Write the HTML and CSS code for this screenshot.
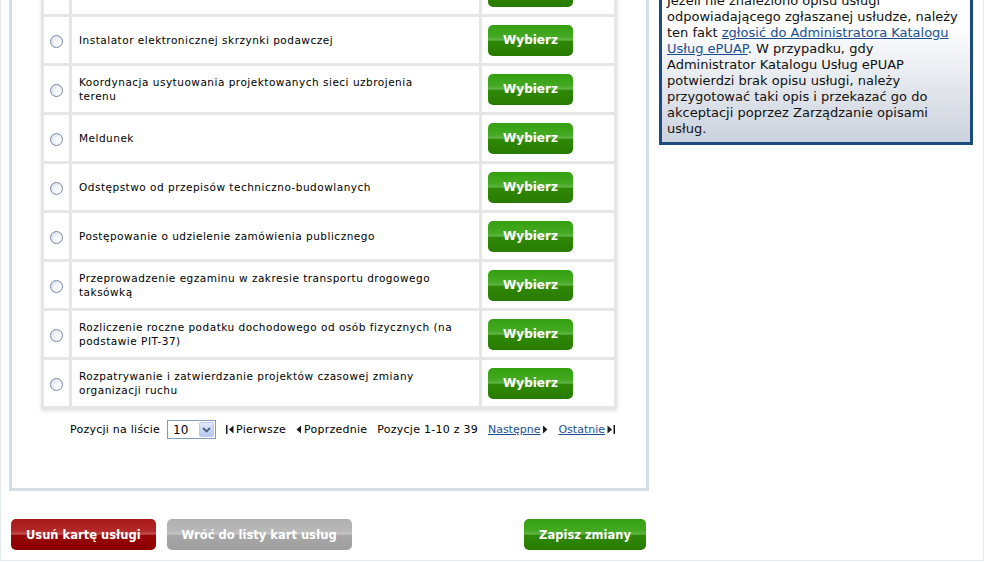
FILE: index.html
```html
<!DOCTYPE html>
<html lang="pl">
<head>
<meta charset="utf-8">
<title>Karta usługi</title>
<link rel="stylesheet" href="styles.css">
</head>
<body>
<div class="page">
  <div class="main">
    <div class="panel">
      <table class="services">
        <colgroup><col class="col-radio"><col class="col-name"><col class="col-action"></colgroup>
        <tr>
          <td class="c-radio"><span class="radio"></span></td>
          <td class="c-name">Informacja publiczna</td>
          <td class="c-action"><button class="btn btn-green btn-pick">Wybierz</button></td>
        </tr>
        <tr>
          <td class="c-radio"><span class="radio"></span></td>
          <td class="c-name">Instalator elektronicznej skrzynki podawczej</td>
          <td class="c-action"><button class="btn btn-green btn-pick">Wybierz</button></td>
        </tr>
        <tr>
          <td class="c-radio"><span class="radio"></span></td>
          <td class="c-name">Koordynacja usytuowania projektowanych sieci uzbrojenia<br>terenu</td>
          <td class="c-action"><button class="btn btn-green btn-pick">Wybierz</button></td>
        </tr>
        <tr>
          <td class="c-radio"><span class="radio"></span></td>
          <td class="c-name">Meldunek</td>
          <td class="c-action"><button class="btn btn-green btn-pick">Wybierz</button></td>
        </tr>
        <tr>
          <td class="c-radio"><span class="radio"></span></td>
          <td class="c-name">Odstępstwo od przepisów techniczno-budowlanych</td>
          <td class="c-action"><button class="btn btn-green btn-pick">Wybierz</button></td>
        </tr>
        <tr>
          <td class="c-radio"><span class="radio"></span></td>
          <td class="c-name">Postępowanie o udzielenie zamówienia publicznego</td>
          <td class="c-action"><button class="btn btn-green btn-pick">Wybierz</button></td>
        </tr>
        <tr>
          <td class="c-radio"><span class="radio"></span></td>
          <td class="c-name">Przeprowadzenie egzaminu w zakresie transportu drogowego<br>taksówką</td>
          <td class="c-action"><button class="btn btn-green btn-pick">Wybierz</button></td>
        </tr>
        <tr>
          <td class="c-radio"><span class="radio"></span></td>
          <td class="c-name">Rozliczenie roczne podatku dochodowego od osób fizycznych (na<br>podstawie PIT-37)</td>
          <td class="c-action"><button class="btn btn-green btn-pick">Wybierz</button></td>
        </tr>
        <tr>
          <td class="c-radio"><span class="radio"></span></td>
          <td class="c-name">Rozpatrywanie i zatwierdzanie projektów czasowej zmiany<br>organizacji ruchu</td>
          <td class="c-action"><button class="btn btn-green btn-pick">Wybierz</button></td>
        </tr>
      </table>

      <div class="pager">
        <span class="pager-label spaced">Pozycji na liście</span>
        <div class="select">
          <span class="select-val">10</span>
          <span class="select-btn"><svg width="9" height="6" viewBox="0 0 9 6"><polyline points="1,1 4.5,4.5 8,1" fill="none" stroke="#4d6185" stroke-width="1.8"/></svg></span>
        </div>
        <span class="pager-item spaced"><svg class="ico" width="8" height="9" viewBox="0 0 8 9"><rect x="0" y="0" width="1.5" height="9" fill="#1a1a1a"/><path d="M7.5 0.5 L3 4.5 L7.5 8.5Z" fill="#1a1a1a"/></svg>Pierwsze</span>
        <span class="pager-item spaced"><svg class="ico" width="6" height="9" viewBox="0 0 6 9"><path d="M5 0.5 L0.5 4.5 L5 8.5Z" fill="#1a1a1a"/></svg>Poprzednie</span>
        <span class="pager-item spaced">Pozycje 1-10 z 39</span>
        <span class="pager-item"><a href="#" class="link">Następne</a><svg class="ico ico-after" width="6" height="9" viewBox="0 0 6 9"><path d="M1 0.5 L5.5 4.5 L1 8.5Z" fill="#1a1a1a"/></svg></span>
        <span class="pager-item"><a href="#" class="link">Ostatnie</a><svg class="ico ico-after" width="8" height="9" viewBox="0 0 8 9"><path d="M0.5 0.5 L5 4.5 L0.5 8.5Z" fill="#1a1a1a"/><rect x="6.5" y="0" width="1.5" height="9" fill="#1a1a1a"/></svg></span>
      </div>
    </div>

    <aside class="info">
      Jeżeli nie znaleziono opisu usługi<br>
      odpowiadającego zgłaszanej usłudze, należy<br>
      ten fakt <a href="#" class="link">zgłosić do Administratora Katalogu<br>Usług ePUAP</a>. W przypadku, gdy<br>
      Administrator Katalogu Usług ePUAP<br>
      potwierdzi brak opisu usługi, należy<br>
      przygotować taki opis i przekazać go do<br>
      akceptacji poprzez Zarządzanie opisami<br>
      usług.
    </aside>
  </div>

  <div class="actions">
    <div class="actions-left">
      <button class="btn btn-red btn-big">Usuń kartę usługi</button>
      <button class="btn btn-grey btn-big">Wróć do listy kart usług</button>
    </div>
    <button class="btn btn-green btn-big">Zapisz zmiany</button>
  </div>
</div>
</body>
</html>
```

FILE: styles.css
```css
* { box-sizing: border-box; }

html, body {
  margin: 0;
  padding: 0;
  background: #ffffff;
}

body {
  font-family: "DejaVu Sans", Verdana, sans-serif;
  color: #000;
  overflow: hidden;
}

.page {
  margin-top: -58px;
  border: 1px solid #e3e7ee;
  border-top: 0;
  padding-bottom: 10px;
}

.main {
  display: flex;
  align-items: flex-start;
  padding-left: 8px;
}

/* left panel */
.panel {
  width: 640px;
  border: 3px solid #d7dde6;
  padding: 20px 0 49px;
}

.services {
  width: 576px;
  margin: 0 auto;
  border-collapse: separate;
  border-spacing: 3px;
  background: #e6e6e6;
  table-layout: fixed;
  box-shadow: 0 2px 4px rgba(0, 0, 0, 0.13);
}

.col-radio { width: 25px; }
.col-name { width: 407px; }
.col-action { width: 132px; }

.services td {
  background: #fff;
  height: 46px;
  padding: 0;
  vertical-align: middle;
}

.c-radio { text-align: center; }

.c-name {
  padding-left: 7px !important;
  font-family: "DejaVu Sans", Verdana, sans-serif;
  font-size: 10.5px;
  letter-spacing: 0.5px;
  line-height: 14px;
  white-space: nowrap;
}

.c-action { padding-left: 6px !important; }

.radio {
  display: inline-block;
  width: 13px;
  height: 13px;
  border-radius: 50%;
  border: 1px solid #7489a8;
  background: radial-gradient(circle at 65% 65%, #ffffff 0, #f5f6f8 35%, #d3d8e2 100%);
  vertical-align: middle;
}

/* buttons */
.btn {
  border: 0;
  border-radius: 5px;
  color: #fff;
  font-family: "DejaVu Sans", Verdana, sans-serif;
  font-weight: bold;
  height: 31px;
  padding: 0 15px;
  cursor: pointer;
  white-space: nowrap;
}

.btn-pick {
  width: 85px;
  padding: 0;
  font-size: 12px;
  display: block;
}

.btn-big { font-size: 11.5px; }

.btn-green {
  background: linear-gradient(to bottom, #33a00e 0%, #45a923 38%, #61b547 49%, #2f8806 52%, #287b01 100%);
}

.btn-red {
  background: linear-gradient(to bottom, #a81818 0%, #b32828 38%, #c45252 49%, #980707 52%, #8b0000 100%);
}

.btn-grey {
  background: linear-gradient(to bottom, #b0b0b0 0%, #b8b8b8 38%, #c6c6c6 49%, #a6a6a6 52%, #9f9f9f 100%);
}

/* pager */
.pager {
  display: flex;
  justify-content: flex-end;
  align-items: center;
  height: 19px;
  margin: 11px 31px 0 0;
  font-size: 11px;
  gap: 10px;
}

.spaced { letter-spacing: 0.25px; }

.pager-label { margin-right: -3px; }

.pager-item {
  display: inline-flex;
  align-items: center;
}

.ico { margin-right: 2px; }
.ico-after { margin-left: 2px; margin-right: 0; }

.select {
  width: 49px;
  height: 19px;
  border: 1px solid #7f9db9;
  display: flex;
  align-items: center;
  justify-content: space-between;
  padding: 0 1px 0 5px;
  font-size: 12px;
}

.select-btn {
  width: 15px;
  height: 15px;
  border: 1px solid #b9cbf0;
  border-radius: 2px;
  background: linear-gradient(to bottom, #dfe8fd, #b6c9f3);
  display: flex;
  align-items: center;
  justify-content: center;
}

.link {
  color: #1b4f92;
  text-decoration: underline;
}

/* info box */
.info {
  margin-left: 10px;
  margin-top: 44px;
  width: 314px;
  border: 3px solid #1d4b80;
  background: linear-gradient(to bottom, #ffffff 0%, #ffffff 22%, #cbd2dd 100%);
  padding: 4px 5px 5px;
  font-size: 13px;
  line-height: 16px;
  white-space: nowrap;
  color: #111;
}

/* bottom actions */
.actions {
  display: flex;
  justify-content: space-between;
  width: 640px;
  margin: 28px 0 0 8px;
  padding: 0 3px 0 2px;
}

.actions-left {
  display: flex;
  gap: 11px;
}
```
